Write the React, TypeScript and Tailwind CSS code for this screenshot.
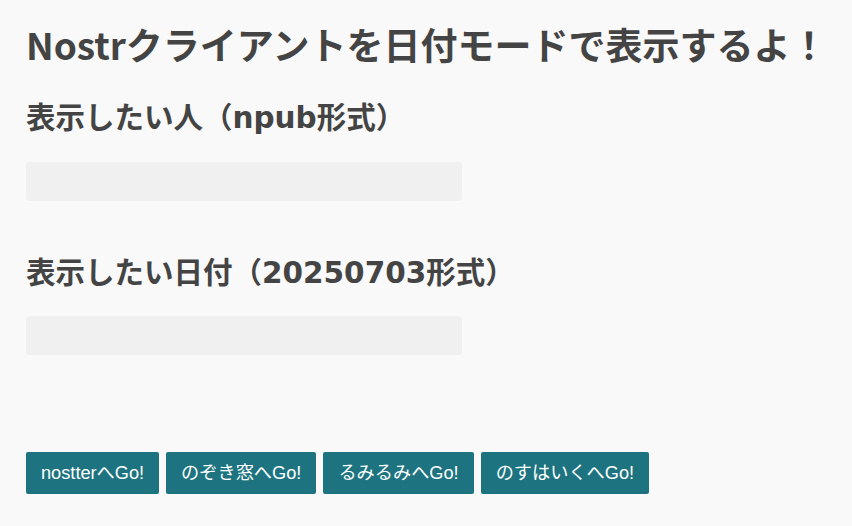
import { useState } from "react";

const clients = [
  { label: "nostterへGo!", href: "#nostter" },
  { label: "のぞき窓へGo!", href: "#nozokimado" },
  { label: "るみるみへGo!", href: "#lumilumi" },
  { label: "のすはいくへGo!", href: "#nos-haiku" },
];

export default function App() {
  const [npub, setNpub] = useState("");
  const [date, setDate] = useState("");

  return (
    <div className="min-h-screen bg-[#f9f9f9] px-[26px] pt-[22px] text-[#444] [font-family:'Noto_Sans_CJK_JP',sans-serif]">
      <h1 className="text-[37px] font-bold leading-[1.2] whitespace-nowrap">
        Nostrクライアントを日付モードで表示するよ！
      </h1>

      {/* npub */}
      <h2 className="mt-[35px] text-[29.5px] font-bold leading-[1.2] [font-family:'DejaVu_Sans','Noto_Sans_CJK_JP',sans-serif]">
        表示したい人（npub形式）
      </h2>
      <input
        type="text"
        value={npub}
        onChange={(ev) => setNpub(ev.target.value)}
        className="mt-[25px] block h-[39px] w-[436px] rounded-[4px] bg-[#f0f0f0] px-3 text-base outline-none"
      />

      {/* 日付 */}
      <h2 className="mt-[55px] text-[29.5px] font-bold leading-[1.2] [font-family:'DejaVu_Sans','Noto_Sans_CJK_JP',sans-serif]">
        表示したい日付（20250703形式）
      </h2>
      <input
        type="text"
        value={date}
        onChange={(ev) => setDate(ev.target.value)}
        className="mt-[25px] block h-[39px] w-[436px] rounded-[4px] bg-[#f0f0f0] px-3 text-base outline-none"
      />

      <div className="mt-[97px] flex gap-[7px]">
        {clients.map((c) => (
          <a
            key={c.href}
            href={c.href}
            className="flex h-[42px] items-center rounded-[2px] bg-[#1d7480] px-[15px] text-[18.2px] text-white [font-family:'Liberation_Sans','Noto_Sans_CJK_JP',sans-serif]"
          >
            {c.label}
          </a>
        ))}
      </div>
    </div>
  );
}
